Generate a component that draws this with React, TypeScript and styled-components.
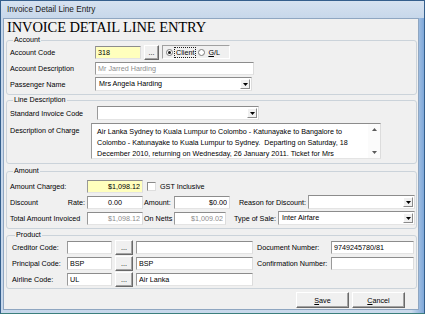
import styled, { createGlobalStyle } from "styled-components";

const GlobalStyle = createGlobalStyle`
  html, body {
    margin: 0;
    padding: 0;
    background: #ffffff;
  }
  body {
    font-family: "Liberation Sans", Arial, sans-serif;
  }
`;

const FONT = 7.2;

const Window = styled.div`
  width: 425px;
  height: 314px;
  box-sizing: border-box;
  border: 1px solid #355f8c;
  border-bottom-color: #3b7f7c;
  background: linear-gradient(to right, #c6d7eb 0%, #cbdaec 97%, #7fa8d9 100%);
  display: flex;
  flex-direction: column;
`;

const TitleBar = styled.div`
  height: 17px;
  flex: none;
  display: flex;
  align-items: center;
  padding-left: 6px;
  font-size: 8.2px;
  color: #1a1a1a;
  background: linear-gradient(#d6e2f0, #c7d7ea);
`;

const Client = styled.div`
  flex: 1;
  margin: 0 5px 3px 2px;
  background: #f0f0f0;
  border: 1px solid #8fa6c1;
  display: flex;
  flex-direction: column;
  font-size: ${FONT}px;
  color: #000;
`;

const Heading = styled.h1`
  margin: 0 0 0 3px;
  height: 17px;
  font-family: "Liberation Serif", "Times New Roman", serif;
  font-weight: normal;
  font-size: 14.5px;
  line-height: 17px;
  letter-spacing: -0.1px;
  white-space: nowrap;
`;

const Group = styled.fieldset<{ $top?: number; $pt?: number; $pb?: number; $pl?: number }>`
  margin: ${(p) => p.$top ?? 0}px 1px 0 2px;
  padding: ${(p) => p.$pt ?? 0}px 1px ${(p) => p.$pb ?? 0}px ${(p) => p.$pl ?? 3}px;
  border: 1px solid #cbd3da;
  border-radius: 3px;
  min-width: 0;
`;

const Legend = styled.legend`
  padding: 0 1px;
  margin-left: 3px;
  font-size: ${FONT}px;
  line-height: 8px;
`;

const Row = styled.div<{ $h?: number; $top?: boolean }>`
  display: flex;
  align-items: ${(p) => (p.$top ? "flex-start" : "center")};
  height: ${(p) => p.$h ?? 16}px;
`;

const Label = styled.span<{ $w: number; $right?: boolean; $pt?: number; $ml?: number }>`
  flex: none;
  width: ${(p) => p.$w}px;
  margin-left: ${(p) => p.$ml ?? 0}px;
  padding-top: ${(p) => p.$pt ?? 0}px;
  padding-right: ${(p) => (p.$right ? 2 : 0)}px;
  box-sizing: border-box;
  text-align: ${(p) => (p.$right ? "right" : "left")};
  white-space: nowrap;
  line-height: 11px;
`;

const TextBox = styled.input<{ $w: number; $yellow?: boolean; $align?: string; $muted?: boolean }>`
  flex: none;
  width: ${(p) => p.$w}px;
  height: 13px;
  box-sizing: border-box;
  margin: 0;
  padding: 0 2px;
  font: inherit;
  font-size: ${FONT}px;
  line-height: 11px;
  text-align: ${(p) => p.$align ?? "left"};
  color: ${(p) => (p.$muted ? "#8d8d8d" : "#000")};
  background: ${(p) => (p.$yellow ? "#ffffbd" : "#ffffff")};
  border: 1px solid;
  border-color: #8c8c8c #dcdcdc #e4e4e4 #9a9a9a;
  outline: none;
`;

const DotsButton = styled.button<{ $w: number }>`
  flex: none;
  width: ${(p) => p.$w}px;
  height: 15px;
  margin: 0 0 0 3px;
  padding: 0 0 2px;
  box-sizing: border-box;
  font: inherit;
  font-size: ${FONT}px;
  line-height: 1;
  color: #000;
  background: #f0f0f0;
  border: 1px solid;
  border-color: #ffffff #696969 #696969 #ffffff;
  box-shadow: inset -1px -1px #a3a3a3;
  display: flex;
  align-items: flex-end;
  justify-content: center;
`;

const OptionBox = styled.div`
  flex: none;
  width: 68px;
  height: 14px;
  margin-left: 3px;
  box-sizing: border-box;
  border: 1px solid;
  border-color: #a0a0a0 #ffffff #ffffff #a0a0a0;
  display: flex;
  align-items: center;
  padding-left: 3px;
`;

const Radio = styled.span<{ $checked?: boolean }>`
  flex: none;
  width: 7px;
  height: 7px;
  box-sizing: border-box;
  border-radius: 50%;
  border: 1px solid #7c7c7c;
  background: #ffffff;
  display: flex;
  align-items: center;
  justify-content: center;
  &::after {
    content: "";
    width: 3px;
    height: 3px;
    border-radius: 50%;
    background: ${(p) => (p.$checked ? "#1a1a1a" : "transparent")};
  }
`;

const OptionText = styled.span<{ $focus?: boolean }>`
  margin-left: 2px;
  margin-right: 3px;
  padding: 0 1px;
  line-height: 9px;
  outline: ${(p) => (p.$focus ? "1px dotted #202020" : "none")};
`;

const Combo = styled.div<{ $w?: number }>`
  flex: ${(p) => (p.$w ? "none" : "1")};
  width: ${(p) => (p.$w ? `${p.$w}px` : "auto")};
  height: 14px;
  box-sizing: border-box;
  background: #ffffff;
  border: 1px solid;
  border-color: #8c8c8c #dcdcdc #e4e4e4 #9a9a9a;
  display: flex;
  align-items: stretch;
`;

const ComboText = styled.span`
  flex: 1;
  padding-left: 3px;
  line-height: 12px;
  white-space: nowrap;
  overflow: hidden;
`;

const ComboButton = styled.span`
  flex: none;
  width: 10px;
  margin: 1px;
  box-sizing: border-box;
  background: #f0f0f0;
  border: 1px solid;
  border-color: #ffffff #8a8a8a #8a8a8a #ffffff;
  display: flex;
  align-items: center;
  justify-content: center;
`;

const Memo = styled.div`
  flex: none;
  width: 290px;
  height: 36px;
  margin-top: 1px;
  box-sizing: border-box;
  background: #ffffff;
  border: 1px solid;
  border-color: #8c8c8c #dcdcdc #e4e4e4 #9a9a9a;
  display: flex;
`;

const MemoText = styled.div`
  flex: 1;
  padding: 2px 0 0 5px;
  line-height: 11px;
  white-space: nowrap;
  overflow: hidden;
`;

const ScrollBar = styled.div`
  flex: none;
  width: 12px;
  display: flex;
  flex-direction: column;
  justify-content: space-between;
  align-items: center;
  padding: 4px 0;
  box-sizing: border-box;
  background: #fbfbfb;
`;

const CheckBox = styled.span`
  flex: none;
  width: 9px;
  height: 9px;
  margin: 0 4px 0 4px;
  box-sizing: border-box;
  background: #ffffff;
  border: 1px solid;
  border-color: #8a8a8a #dedede #dedede #8a8a8a;
`;

const Footer = styled.div`
  display: flex;
  justify-content: flex-end;
  gap: 3px;
  margin-top: 3px;
  padding-right: 13px;
`;

const PushButton = styled.button`
  width: 53px;
  height: 16px;
  margin: 0;
  padding: 0;
  box-sizing: border-box;
  font: inherit;
  font-size: ${FONT}px;
  color: #000;
  background: #f0f0f0;
  border: 1px solid;
  border-color: #ffffff #696969 #696969 #ffffff;
  box-shadow: inset -1px -1px #a3a3a3;
`;

function DropArrow() {
  return (
    <svg width="5" height="3" viewBox="0 0 5 3">
      <path d="M0 0h5L2.5 3z" fill="#000" />
    </svg>
  );
}

function ComboBox({ w, text }: { w?: number; text?: string }) {
  return (
    <Combo $w={w}>
      <ComboText>{text}</ComboText>
      <ComboButton>
        <DropArrow />
      </ComboButton>
    </Combo>
  );
}

export default function App() {
  return (
    <>
      <GlobalStyle />
      <Window>
        <TitleBar>Invoice Detail Line Entry</TitleBar>
        <Client>
          <Heading>INVOICE DETAIL LINE ENTRY</Heading>

          <Group $pb={2}>
            <Legend>Account</Legend>
            <Row>
              <Label $w={85}>Account Code</Label>
              <TextBox $w={46} $yellow value="318" readOnly />
              <DotsButton $w={15}>...</DotsButton>
              <OptionBox>
                <Radio $checked />
                <OptionText $focus>Client</OptionText>
                <Radio />
                <OptionText>
                  <u>G</u>/L
                </OptionText>
              </OptionBox>
            </Row>
            <Row>
              <Label $w={85}>Account Description</Label>
              <TextBox $w={159} $muted value="Mr Jarred Harding" readOnly />
            </Row>
            <Row>
              <Label $w={85}>Passenger Name</Label>
              <ComboBox w={157} text="Mrs Angela Harding" />
            </Row>
          </Group>

          <Group $top={1} $pb={4}>
            <Legend>Line Description</Legend>
            <Row $h={18}>
              <Label $w={87}>Standard Invoice Code</Label>
              <ComboBox w={162} />
            </Row>
            <Row $h={37} $top>
              <Label $w={81} $pt={3}>
                Description of Charge
              </Label>
              <Memo>
                <MemoText>
                  Air Lanka Sydney to Kuala Lumpur to Colombo - Katunayake to Bangalore to
                  <br />
                  Colombo - Katunayake to Kuala Lumpur to Sydney.&nbsp; Departing on Saturday, 18
                  <br />
                  December 2010, returning on Wednesday, 26 January 2011. Ticket for Mrs
                </MemoText>
                <ScrollBar>
                  <svg width="5" height="3" viewBox="0 0 5 3">
                    <path d="M0 3h5L2.5 0z" fill="#5a5a5a" />
                  </svg>
                  <svg width="5" height="3" viewBox="0 0 5 3">
                    <path d="M0 0h5L2.5 3z" fill="#5a5a5a" />
                  </svg>
                </ScrollBar>
              </Memo>
            </Row>
          </Group>

          <Group $top={3} $pt={3} $pb={2}>
            <Legend>Amount</Legend>
            <Row>
              <Label $w={77}>Amount Charged:</Label>
              <TextBox $w={56} $yellow $align="right" value="$1,098.12" readOnly />
              <CheckBox />
              <span>GST Inclusive</span>
            </Row>
            <Row>
              <Label $w={55}>Discount</Label>
              <Label $w={22} $right>
                Rate:
              </Label>
              <TextBox $w={56} $align="center" value="0.00" readOnly />
              <Label $w={30} $ml={1}>
                Amount:
              </Label>
              <TextBox $w={56} $align="right" value="$0.00" readOnly />
              <Label $w={78} $right>
                Reason for Discount:
              </Label>
              <ComboBox />
            </Row>
            <Row>
              <Label $w={77}>Total Amount Invoiced</Label>
              <TextBox $w={56} $muted $align="right" value="$1,098.12" readOnly />
              <Label $w={30} $ml={1}>
                On Netts
              </Label>
              <TextBox $w={52} $muted $align="right" value="$1,009.02" readOnly />
              <Label $w={52} $right>
                Type of Sale:
              </Label>
              <ComboBox text="Inter Airfare" />
            </Row>
          </Group>

          <Group $top={2} $pb={1} $pl={5}>
            <Legend>Product</Legend>
            <Row>
              <Label $w={55}>Creditor Code:</Label>
              <TextBox $w={45} value="" readOnly />
              <DotsButton $w={18}>...</DotsButton>
              <TextBox $w={117} value="" readOnly style={{ marginLeft: 3 }} />
              <Label $w={74} $ml={4}>
                Document Number:
              </Label>
              <TextBox $w={83} value="9749245780/81" readOnly />
            </Row>
            <Row>
              <Label $w={55}>Principal Code:</Label>
              <TextBox $w={45} value="BSP" readOnly />
              <DotsButton $w={18}>...</DotsButton>
              <TextBox $w={117} value="BSP" readOnly style={{ marginLeft: 3 }} />
              <Label $w={74} $ml={4}>
                Confirmation Number:
              </Label>
              <TextBox $w={83} value="" readOnly />
            </Row>
            <Row>
              <Label $w={55}>Airline Code:</Label>
              <TextBox $w={45} value="UL" readOnly />
              <DotsButton $w={18}>...</DotsButton>
              <TextBox $w={117} value="Air Lanka" readOnly style={{ marginLeft: 3 }} />
            </Row>
          </Group>

          <Footer>
            <PushButton>
              <u>S</u>ave
            </PushButton>
            <PushButton>
              <u>C</u>ancel
            </PushButton>
          </Footer>
        </Client>
      </Window>
    </>
  );
}
